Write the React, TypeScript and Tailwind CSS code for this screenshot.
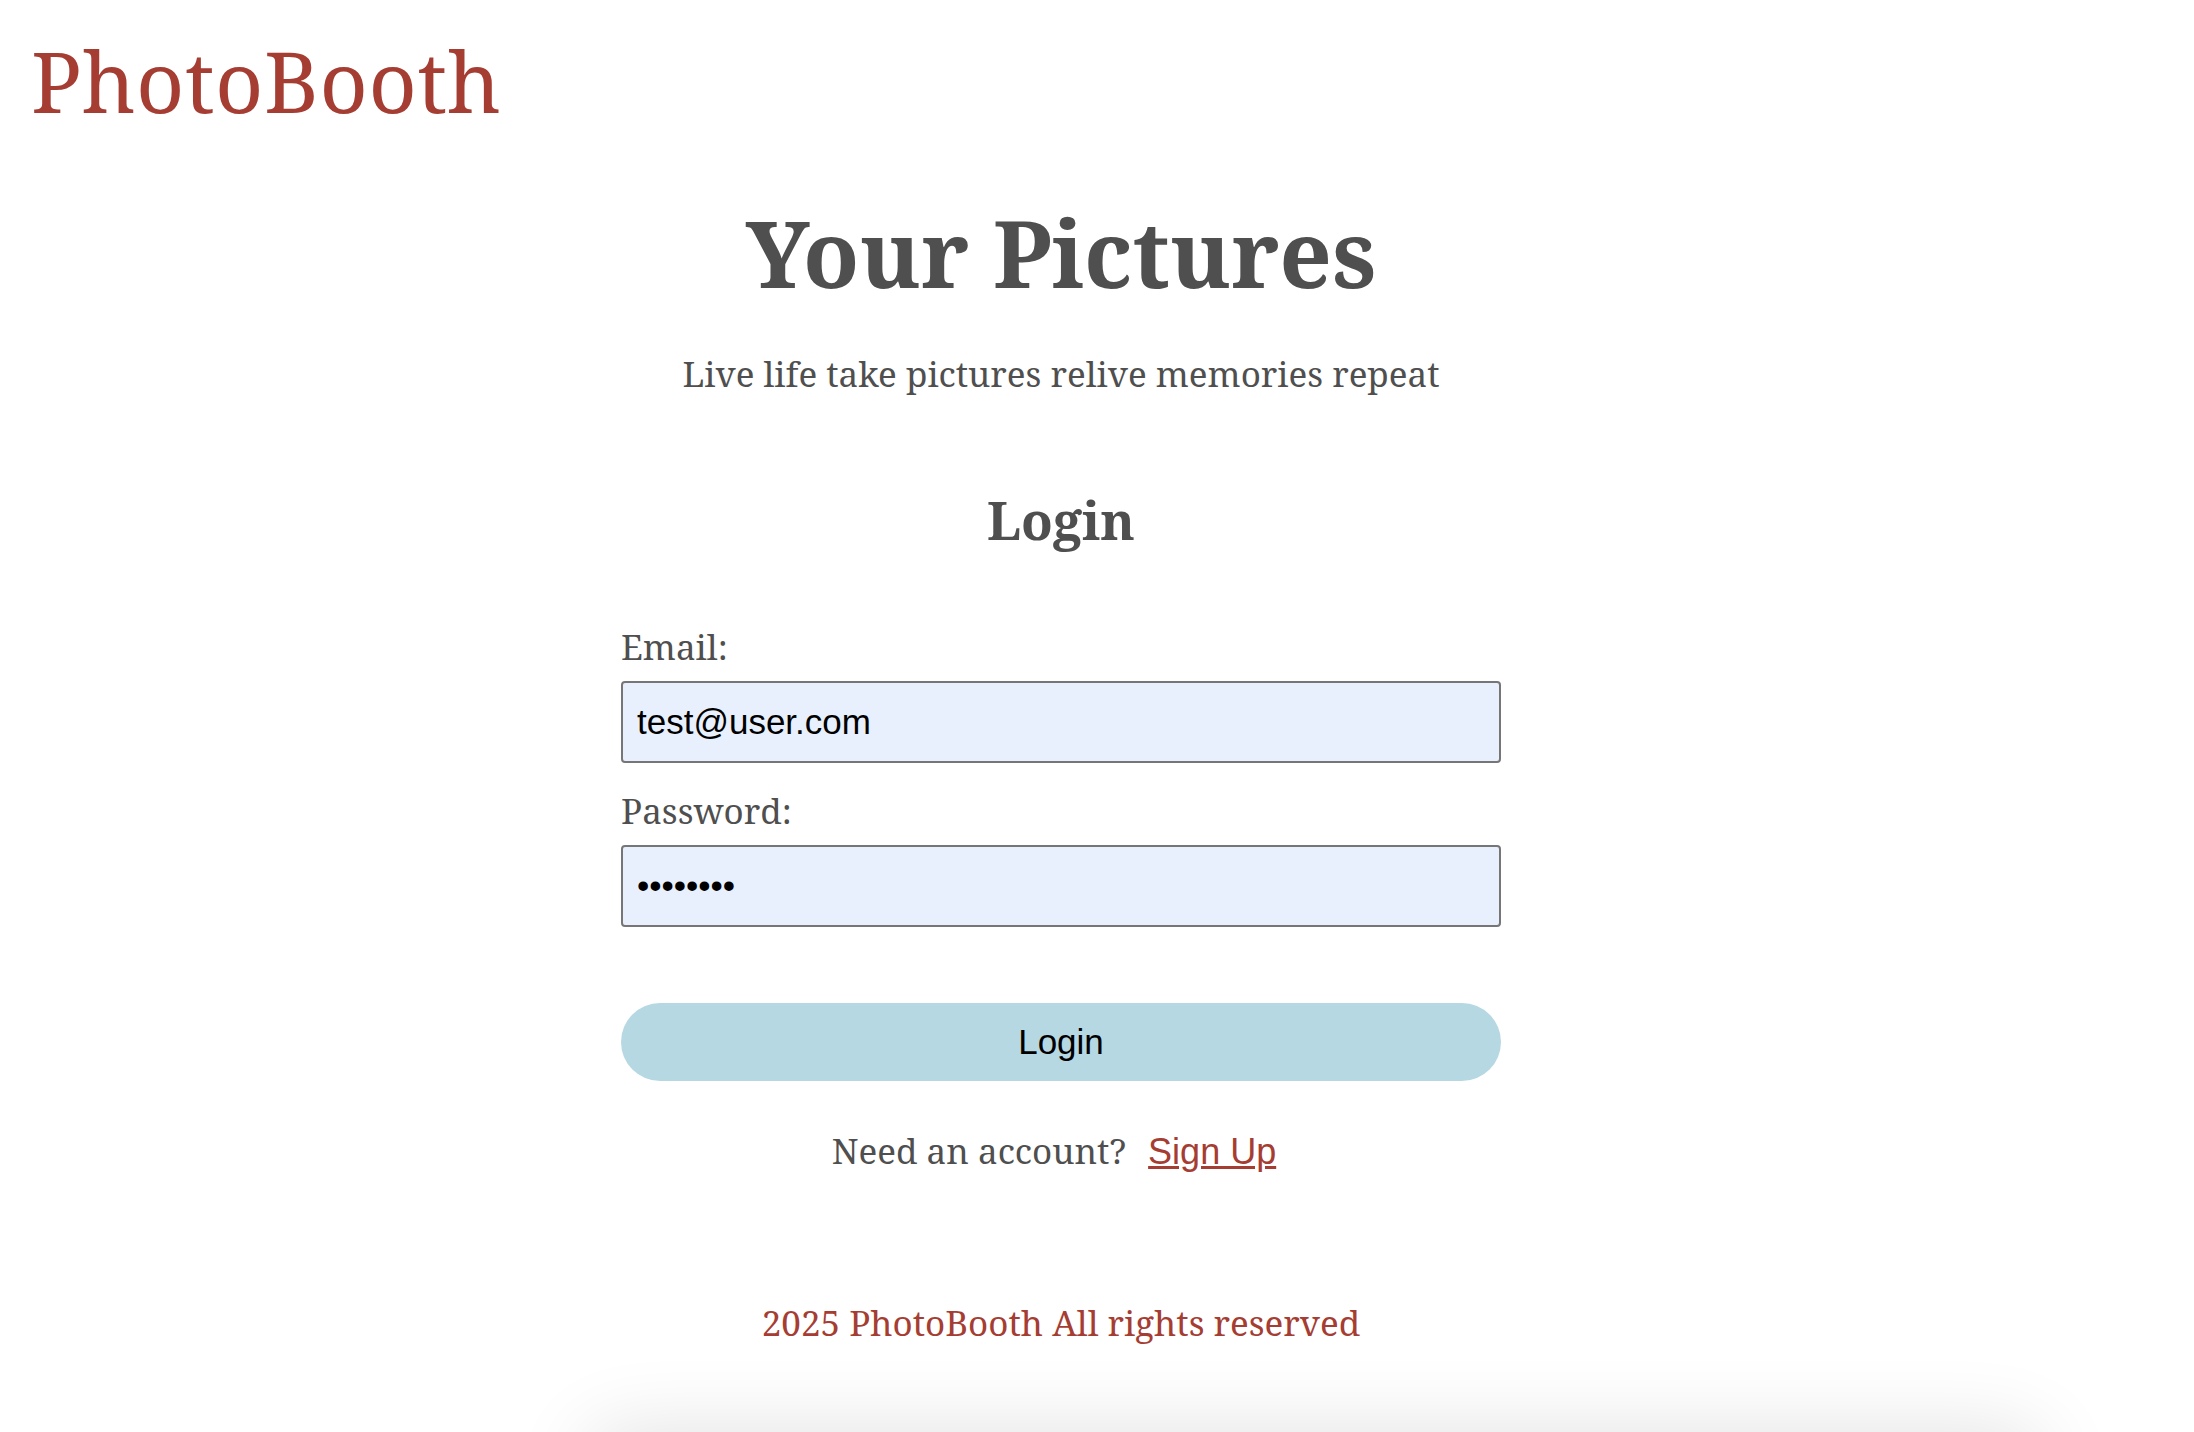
import React from 'react';

const serif = 'font-["Noto_Serif","DejaVu_Serif",serif]';
const sans = 'font-["Liberation_Sans",Arial,sans-serif]';

function App() {
  const [email, setEmail] = React.useState('test@user.com');
  const [password, setPassword] = React.useState('12345678');

  return (
    <div className={`h-[1432px] overflow-hidden bg-white ${serif}`}>
      {/* Header */}
      <header className="pl-[31px] pt-[31px]">
        <div className="text-[84px] leading-[100px] tracking-[0.5px] text-[#a53d33]">PhotoBooth</div>
      </header>

      {/* Main */}
      <main className="flex flex-col items-center pr-[72px]">
        <h1 className="mt-[64px] text-[92px] leading-[116px] font-bold text-[#4f4f4f]">Your Pictures</h1>
        <p className="mt-[39px] text-[35px] leading-[48px] text-[#4f4f4f]">
          Live life take pictures relive memories repeat
        </p>

        <h2 className="mt-[90px] text-[52px] leading-[64px] font-bold text-[#4f4f4f]">Login</h2>

        <form className="mt-[73px] flex w-[880px] flex-col" onSubmit={(e) => e.preventDefault()}>
          <label className="text-[35px] leading-[44px] text-[#4f4f4f]">Email:</label>
          <input
            type="email"
            value={email}
            onChange={(e) => setEmail(e.target.value)}
            className={`mt-[12px] h-[82px] rounded-[4px] border-2 border-[#767676] bg-[#e8f0fe] px-[14px] text-[35px] text-black outline-none ${sans}`}
          />
          <label className="mt-[26px] text-[35px] leading-[44px] text-[#4f4f4f]">Password:</label>
          <input
            type="password"
            value={password}
            onChange={(e) => setPassword(e.target.value)}
            className={`mt-[12px] h-[82px] rounded-[4px] border-2 border-[#767676] bg-[#e8f0fe] px-[14px] text-[35px] text-black outline-none ${sans}`}
          />
          <button
            type="submit"
            className={`mt-[76px] h-[78px] rounded-full bg-[#b6d8e3] text-[35px] text-black ${sans}`}
          >
            Login
          </button>
        </form>

        <p className="mt-[48px] pr-[14px] text-[35px] leading-[44px] text-[#4f4f4f]">
          Need an account?{' '}
          <a href="#" className={`ml-[13px] text-[36px] text-[#a53d33] underline ${sans}`}>
            Sign Up
          </a>
        </p>

        <footer className="mt-[127px] text-[35px] leading-[44px] text-[#a53d33]">
          2025 PhotoBooth All rights reserved
        </footer>
      </main>

      {/* shadow of the section below the fold */}
      <div className="ml-[594px] mt-[96px] h-[60px] w-[1442px] rounded-[60px] bg-white shadow-[0_0_80px_10px_rgba(0,0,0,0.12)]" />
    </div>
  );
}

export default App;
